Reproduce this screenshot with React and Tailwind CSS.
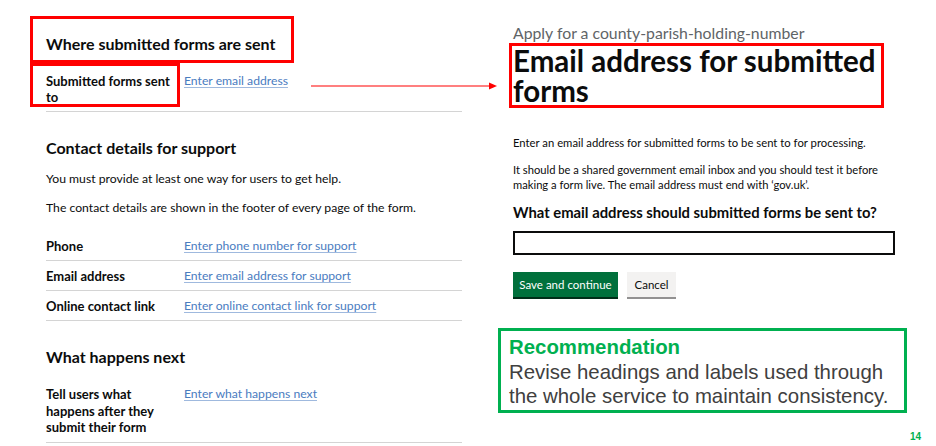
import React from "react";

const gds = { fontFamily: "Lato, 'Liberation Sans', sans-serif" };
const arial = { fontFamily: "'Liberation Sans', Arial, sans-serif" };

function Link({ children }) {
  return (
    <a href="#" className="text-[#4a7cbf] underline decoration-[#9fb9de] underline-offset-2">
      {children}
    </a>
  );
}

function Row({ label, link, first, lh = "leading-[16px]" }) {
  return (
    <div
      className={`grid grid-cols-[138px_1fr] pt-[7px] pb-[6px] border-b border-[#d4d4d4] ${first ? "mt-[15px]" : ""}`}
    >
      <div className={`font-bold text-[13px] ${lh} text-[#0b0c0c] pr-1`}>{label}</div>
      <div className={`text-[12.2px] ${lh}`}>
        <Link>{link}</Link>
      </div>
    </div>
  );
}

function LeftPanel() {
  return (
    <div className="w-[462px] pl-[46px] flex flex-col text-[#0b0c0c]" style={gds}>
      <h2 className="mt-[34px] text-[16px] leading-[20px] font-bold">Where submitted forms are sent</h2>
      <div className="mt-[19px] grid grid-cols-[138px_1fr] pb-[6px] border-b border-[#d4d4d4]">
        <div className="font-bold text-[13px] leading-[16px] pr-1">Submitted forms sent to</div>
        <div className="text-[12.2px] leading-[16px]">
          <Link>Enter email address</Link>
        </div>
      </div>

      <h2 className="mt-[26px] text-[16px] leading-[20px] font-bold">Contact details for support</h2>
      <p className="mt-[13px] text-[12.2px] leading-[16px]">You must provide at least one way for users to get help.</p>
      <p className="mt-[13px] text-[12.2px] leading-[16px]">
        The contact details are shown in the footer of every page of the form.
      </p>
      <Row first label="Phone" link="Enter phone number for support" />
      <Row label="Email address" link="Enter email address for support" />
      <Row label="Online contact link" link="Enter online contact link for support" />

      <h2 className="mt-[26px] text-[16px] leading-[20px] font-bold">What happens next</h2>
      <div className="mt-[19px] grid grid-cols-[138px_1fr] pb-[6px] border-b border-[#d4d4d4]">
        <div className="font-bold text-[13px] leading-[16.5px] pr-1">
          Tell users what happens after they submit their form
        </div>
        <div className="text-[12.2px] leading-[16.5px]">
          <Link>Enter what happens next</Link>
        </div>
      </div>
    </div>
  );
}

function RightPanel() {
  return (
    <div className="flex-1 pl-[51px] flex flex-col text-[#0b0c0c]">
      <div style={gds} className="flex flex-col">
        <div className="mt-[23px] text-[15.8px] leading-[20px] text-[#5f6467]">
          Apply for a county-parish-holding-number
        </div>
        <h1 className="mt-[3px] w-[380px] text-[29.5px] leading-[30px] font-bold">
          Email address for submitted forms
        </h1>
        <p className="mt-[29px] text-[11.3px] leading-[15px]">
          Enter an email address for submitted forms to be sent to for processing.
        </p>
        <p className="mt-[12px] w-[380px] text-[11.2px] leading-[15px]">
          It should be a shared government email inbox and you should test it before making a form live. The email
          address must end with ‘gov.uk’.
        </p>
        <label className="mt-[10px] text-[14.8px] leading-[20px] font-bold">
          What email address should submitted forms be sent to?
        </label>
        <input className="mt-[9px] w-[382px] h-[24px] border-2 border-[#0b0c0c] outline-none" />
        <div className="mt-[17px] flex gap-[9px] text-[11.5px]">
          <button className="w-[105px] h-[25px] bg-[#00703c] text-white shadow-[0_2px_0_#002d18]">
            Save and continue
          </button>
          <button className="w-[49px] h-[25px] bg-[#f3f2f1] text-[#0b0c0c] shadow-[0_2px_0_#929191]">Cancel</button>
        </div>
      </div>

      <div
        className="mt-[31px] -ml-[15px] w-[409px] border-[3px] border-[#00b050] pl-[8px] pt-[4px] pb-[1px] text-[20.4px] leading-[24.5px]"
        style={arial}
      >
        <div className="font-bold text-[#00b050]">Recommendation</div>
        <div className="text-[#404040]">
          Revise headings and labels used through the whole service to maintain consistency.
        </div>
      </div>
    </div>
  );
}

export default function App() {
  return (
    <div className="relative w-[936px] h-[446px] overflow-hidden bg-white flex">
      <LeftPanel />
      <RightPanel />

      {/* annotations */}
      <div className="absolute left-[30px] top-[16px] w-[264px] h-[47px] border-[3px] border-[#ff0000]" />
      <div className="absolute left-[30px] top-[63px] w-[150px] h-[44px] border-[3px] border-[#ff0000]" />
      <div className="absolute left-[509px] top-[43px] w-[375px] h-[65px] border-[3px] border-[#ff0000]" />
      <svg className="absolute left-[310px] top-[80px]" width="190" height="12" viewBox="0 0 190 12">
        <line x1="1" y1="6" x2="180" y2="6" stroke="#ff0000" strokeWidth="1.2" />
        <polygon points="179,2.5 187,6 179,9.5" fill="#ff0000" />
      </svg>
      <div
        className="absolute left-[910px] top-[431px] text-[10px] leading-[12px] font-bold text-[#00b050]"
        style={arial}
      >
        14
      </div>
    </div>
  );
}
